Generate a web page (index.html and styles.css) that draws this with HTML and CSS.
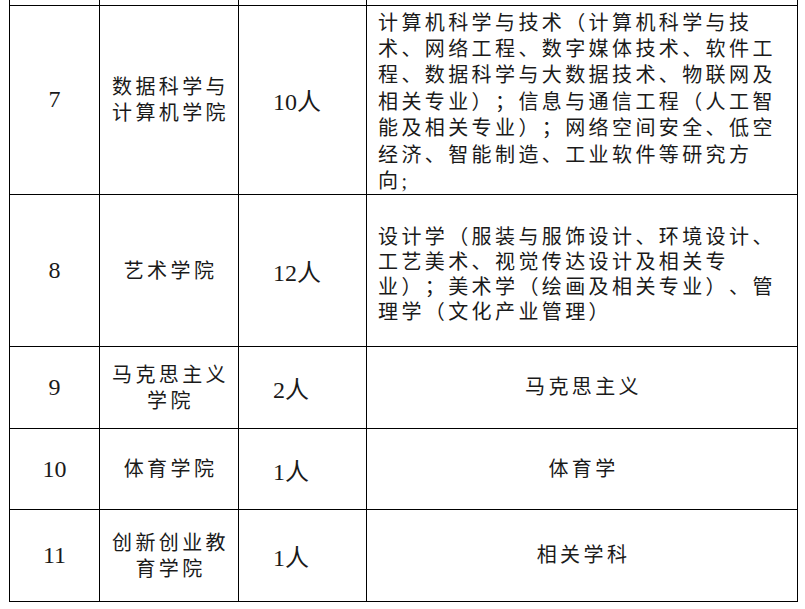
FILE: index.html
```html
<!DOCTYPE html>
<html lang="zh-CN">
<head>
<meta charset="utf-8">
<title>招聘岗位表</title>
<link rel="stylesheet" href="styles.css">
</head>
<body>
<div class="page">
  <table class="grid">
    <colgroup>
      <col class="c-no">
      <col class="c-dept">
      <col class="c-num">
      <col class="c-major">
    </colgroup>
    <tbody>
      <tr class="r-cut">
        <td></td><td></td><td></td><td></td>
      </tr>
      <tr class="r7">
        <td class="no">7</td>
        <td class="dept">数据科学与计算机学院</td>
        <td class="num">10人</td>
        <td class="major loose">计算机科学与技术（计算机科学与技术、网络工程、数字媒体技术、软件工程、数据科学与大数据技术、物联网及相关专业）；信息与通信工程（人工智能及相关专业）；网络空间安全、低空经济、智能制造、工业软件等研究方向;</td>
      </tr>
      <tr class="r8">
        <td class="no">8</td>
        <td class="dept">艺术学院</td>
        <td class="num">12人</td>
        <td class="major shifted">设计学（服装与服饰设计、环境设计、工艺美术、视觉传达设计及相关专业）；美术学（绘画及相关专业）、管理学（文化产业管理）</td>
      </tr>
      <tr class="r9">
        <td class="no">9</td>
        <td class="dept">马克思主义学院</td>
        <td class="num">2人</td>
        <td class="major center">马克思主义</td>
      </tr>
      <tr class="r10">
        <td class="no">10</td>
        <td class="dept">体育学院</td>
        <td class="num">1人</td>
        <td class="major center">体育学</td>
      </tr>
      <tr class="r11">
        <td class="no">11</td>
        <td class="dept">创新创业教育学院</td>
        <td class="num">1人</td>
        <td class="major center">相关学科</td>
      </tr>
    </tbody>
  </table>
</div>
</body>
</html>
```

FILE: styles.css
```css
html, body {
  margin: 0;
  padding: 0;
  background: #ffffff;
}

.page {
  padding: 0 0 0 9px;
}

.grid {
  border-collapse: collapse;
  table-layout: fixed;
  width: 788px;
  font-family: "Liberation Serif", "Noto Sans CJK SC", serif;
  font-size: 20px;
  color: #1a1a1a;
  text-spacing-trim: space-all;
}

.c-no { width: 90px; }
.c-dept { width: 139px; }
.c-num { width: 128px; }
.c-major { width: 431px; }

.grid td {
  box-sizing: border-box;
  border: 1px solid #000;
  padding: 0;
  vertical-align: middle;
}

.r-cut td {
  border-top: none;
  height: 5px;
  font-size: 0;
  line-height: 0;
}

.r7 td { height: 189px; }
.r8 td { height: 152px; }
.r9 td { height: 82px; }
.r10 td { height: 81px; }
.r11 td { height: 92px; }

.no {
  text-align: center;
  font-size: 24px;
}

.dept {
  text-align: center;
  letter-spacing: 3.4px;
  line-height: 26px;
  padding: 0 6px 0 9px !important;
}

.num {
  text-align: left;
  font-size: 24px;
  letter-spacing: 0;
  padding-left: 34px !important;
}

.major {
  letter-spacing: 3.4px;
  line-height: 25px;
  padding: 0 20px 0 11px !important;
}

.major.shifted {
  padding-top: 9px !important;
}

.major.loose {
  line-height: 26.4px;
  vertical-align: top;
  padding-top: 4px !important;
}

.major.center {
  text-align: center;
  padding: 0 0 0 3px !important;
}
```
